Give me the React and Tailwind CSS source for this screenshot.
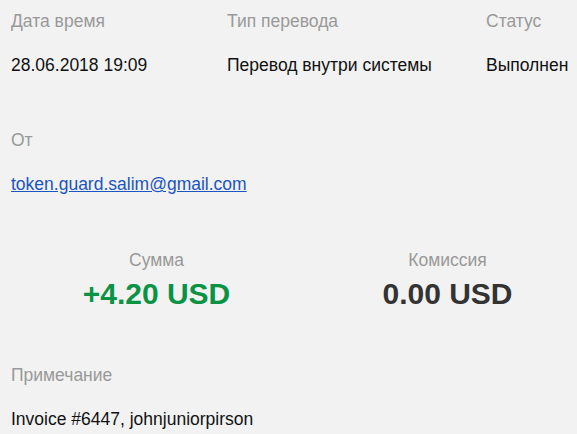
export default function App() {
  return (
    <div className="min-h-[434px] bg-[#f2f2f2] pl-[11px] pt-[11px] font-['Liberation_Sans',Arial,sans-serif] text-[17.5px] leading-[20px] text-[#111]">
      {/* Header row */}
      <div className="flex text-[#999]">
        <div className="w-[216px]">Дата время</div>
        <div className="w-[259px]">Тип перевода</div>
        <div>Статус</div>
      </div>
      <div className="mt-[24px] flex">
        <div className="w-[216px]">28.06.2018 19:09</div>
        <div className="w-[259px]">Перевод внутри системы</div>
        <div>Выполнен</div>
      </div>

      {/* Sender */}
      <div className="mt-[55px] text-[#999]">От</div>
      <div className="mt-[24px]">
        <a href="#" className="text-[#1a55c0] underline">token.guard.salim@gmail.com</a>
      </div>

      {/* Amounts */}
      <div className="mt-[56px] flex text-center">
        <div className="w-[291px] shrink-0">
          <div className="text-[#999]">Сумма</div>
          <div className="mt-[7px] text-[30px] leading-[34px] font-bold text-[#0a9345]">+4.20 USD</div>
        </div>
        <div className="w-[291px] shrink-0">
          <div className="text-[#999]">Комиссия</div>
          <div className="mt-[7px] text-[30px] leading-[34px] font-bold text-[#333]">0.00 USD</div>
        </div>
      </div>

      {/* Note */}
      <div className="mt-[54px] text-[#999]">Примечание</div>
      <div className="mt-[24px]">Invoice #6447, johnjuniorpirson</div>
    </div>
  );
}
